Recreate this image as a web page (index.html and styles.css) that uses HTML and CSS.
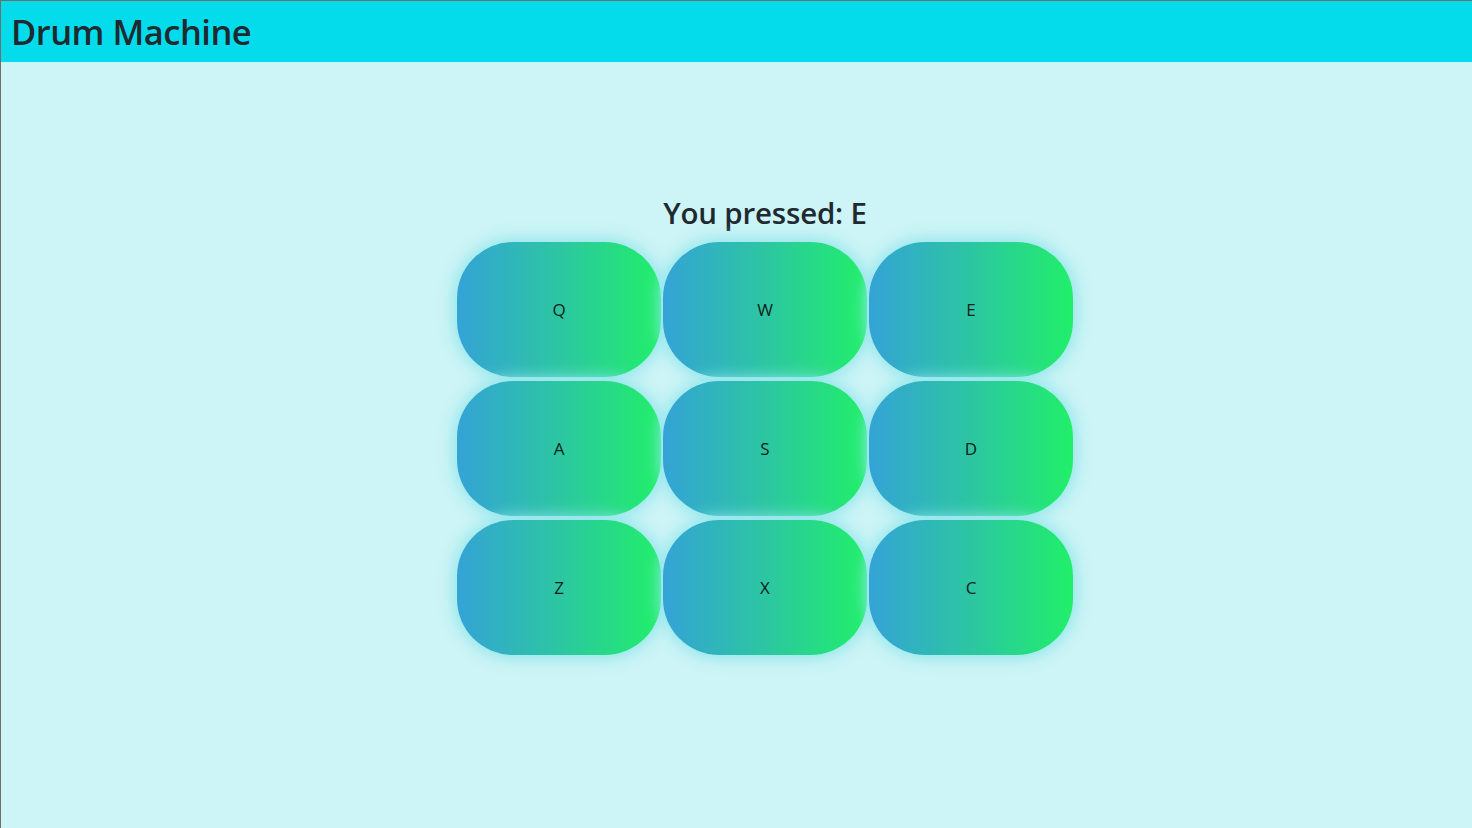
FILE: index.html
```html
<!DOCTYPE html>
<html>
<head>
<meta charset="utf-8">
<link rel="stylesheet" href="styles.css">
</head>
<body>
<div class="frame">
  <header class="topbar">
    <h1 class="title">Drum Machine</h1>
  </header>
  <main class="stage">
    <h2 class="display">You pressed: E</h2>
    <div class="pads">
      <button class="pad">Q</button>
      <button class="pad">W</button>
      <button class="pad">E</button>
      <button class="pad">A</button>
      <button class="pad">S</button>
      <button class="pad">D</button>
      <button class="pad">Z</button>
      <button class="pad">X</button>
      <button class="pad">C</button>
    </div>
  </main>
</div>
</body>
</html>
```
FILE: styles.css
```css
html, body {
  margin: 0;
  padding: 0;
  height: 100%;
}
body {
  font-family: "Open Sans", "Noto Sans", sans-serif;
  color: #1f2328;
  background: #cdf4f6;
}
.frame {
  box-sizing: border-box;
  height: 828px;
  border-top: 1px solid #6e6e6e;
  border-left: 1px solid #6e6e6e;
  background: #cdf4f6;
  display: flex;
  flex-direction: column;
}
.topbar {
  height: 61px;
  background: #04dcec;
  display: flex;
  align-items: center;
  padding-left: 10px;
}
.title {
  margin: 0;
  font-size: 34.5px;
  font-weight: 600;
  letter-spacing: -0.5px;
  color: #1e2a30;
}
.stage {
  display: flex;
  flex-direction: column;
  align-items: center;
  padding-top: 131px;
  padding-left: 57px;
}
.display {
  margin: 0 0 9px 0;
  font-size: 29.5px;
  font-weight: 600;
  line-height: 40px;
  letter-spacing: -0.2px;
  color: #1e2a30;
}
.pads {
  display: grid;
  grid-template-columns: repeat(3, 204px);
  grid-auto-rows: 135px;
  column-gap: 2px;
  row-gap: 4px;
}
.pad {
  border: none;
  border-radius: 56px;
  background: linear-gradient(90deg, #34a3d6 0%, #2cc6a2 50%, #21ef69 100%);
  box-shadow: 0 0 16px 3px #8ee6ec;
  font-family: "Open Sans", "Noto Sans", sans-serif;
  font-size: 17px;
  color: #10201a;
  padding: 0;
  cursor: pointer;
}
```
